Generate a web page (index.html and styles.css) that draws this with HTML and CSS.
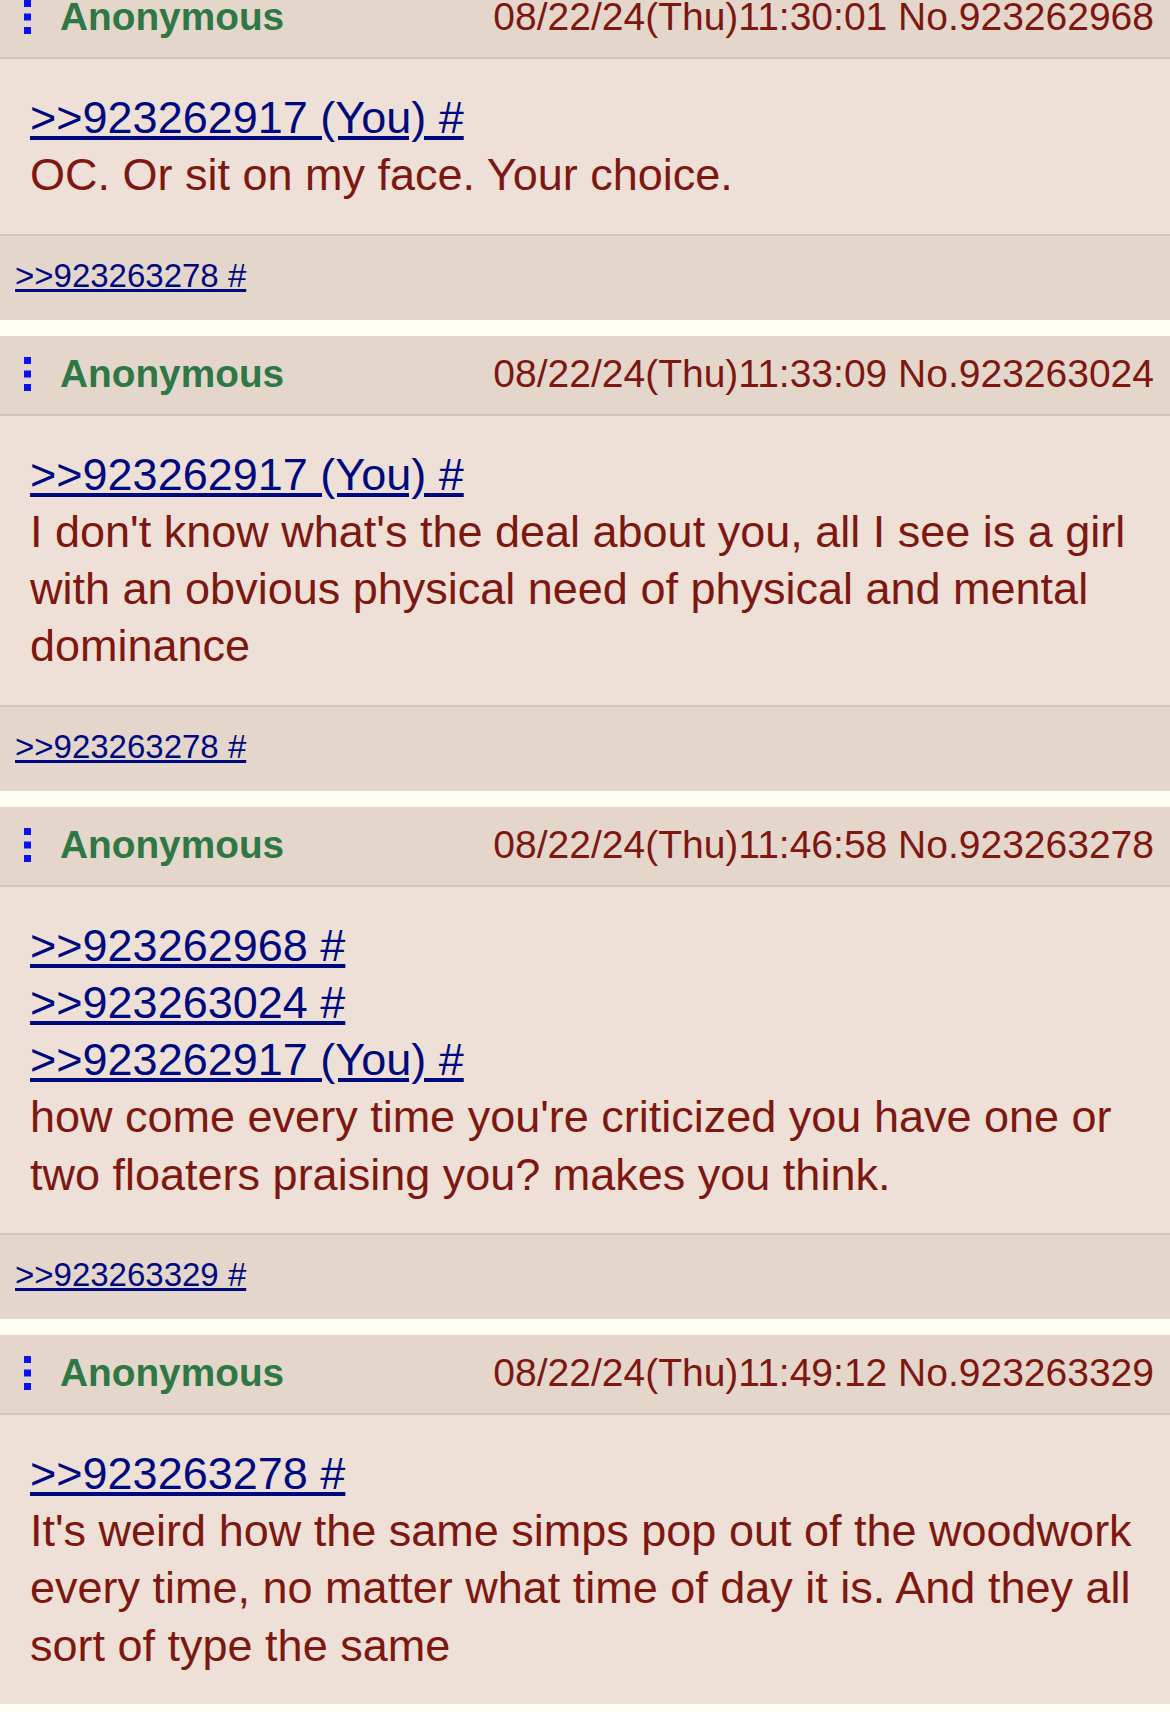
FILE: index.html
```html
<!DOCTYPE html>
<html lang="en">
<head>
<meta charset="utf-8">
<title>Thread</title>
<link rel="stylesheet" href="styles.css">
</head>
<body>
<main class="thread">

  <article class="post">
    <header class="post-head">
      <svg class="menu-dots" width="7" height="34" viewBox="0 0 7 34" aria-hidden="true"><rect x="0" y="0" width="7" height="7"/><rect x="0" y="13.5" width="7" height="7"/><rect x="0" y="27" width="7" height="7"/></svg>
      <span class="name">Anonymous</span>
      <span class="meta">08/22/24(Thu)11:30:01 No.923262968</span>
    </header>
    <div class="post-body">
      <a class="quote" href="#">&gt;&gt;923262917 (You) #</a><br>
      OC. Or sit on my face. Your choice.
    </div>
    <footer class="post-replies"><a href="#">&gt;&gt;923263278 #</a></footer>
  </article>

  <article class="post">
    <header class="post-head">
      <svg class="menu-dots" width="7" height="34" viewBox="0 0 7 34" aria-hidden="true"><rect x="0" y="0" width="7" height="7"/><rect x="0" y="13.5" width="7" height="7"/><rect x="0" y="27" width="7" height="7"/></svg>
      <span class="name">Anonymous</span>
      <span class="meta">08/22/24(Thu)11:33:09 No.923263024</span>
    </header>
    <div class="post-body">
      <a class="quote" href="#">&gt;&gt;923262917 (You) #</a><br>
      I don't know what's the deal about you, all I see is a girl with an obvious physical need of physical and mental dominance
    </div>
    <footer class="post-replies"><a href="#">&gt;&gt;923263278 #</a></footer>
  </article>

  <article class="post">
    <header class="post-head">
      <svg class="menu-dots" width="7" height="34" viewBox="0 0 7 34" aria-hidden="true"><rect x="0" y="0" width="7" height="7"/><rect x="0" y="13.5" width="7" height="7"/><rect x="0" y="27" width="7" height="7"/></svg>
      <span class="name">Anonymous</span>
      <span class="meta">08/22/24(Thu)11:46:58 No.923263278</span>
    </header>
    <div class="post-body">
      <a class="quote" href="#">&gt;&gt;923262968 #</a><br>
      <a class="quote" href="#">&gt;&gt;923263024 #</a><br>
      <a class="quote" href="#">&gt;&gt;923262917 (You) #</a><br>
      how come every time you're criticized you have one or two floaters praising you? makes you think.
    </div>
    <footer class="post-replies"><a href="#">&gt;&gt;923263329 #</a></footer>
  </article>

  <article class="post">
    <header class="post-head">
      <svg class="menu-dots" width="7" height="34" viewBox="0 0 7 34" aria-hidden="true"><rect x="0" y="0" width="7" height="7"/><rect x="0" y="13.5" width="7" height="7"/><rect x="0" y="27" width="7" height="7"/></svg>
      <span class="name">Anonymous</span>
      <span class="meta">08/22/24(Thu)11:49:12 No.923263329</span>
    </header>
    <div class="post-body post-body-last">
      <a class="quote" href="#">&gt;&gt;923263278 #</a><br>
      It's weird how the same simps pop out of the woodwork every time, no matter what time of day it is. And they all sort of type the same
    </div>
  </article>

</main>
</body>
</html>
```

FILE: styles.css
```css
html, body {
  margin: 0;
  padding: 0;
  background: #fffff0;
}

body {
  font-family: "Liberation Sans", Arial, sans-serif;
  color: #7d1710;
}

.thread {
  margin-top: -21px;
  display: flex;
  flex-direction: column;
  gap: 16px;
}

.post {
  display: flex;
  flex-direction: column;
}

.post-head {
  box-sizing: border-box;
  height: 80px;
  padding: 0 16px 2px 24px;
  display: flex;
  align-items: center;
  background: #e5d6cc;
  border-bottom: 2px solid #d7c2ba;
}

.menu-dots {
  display: block;
  flex: none;
  fill: #0a10f0;
}

.name {
  margin-left: 29px;
  font-weight: bold;
  font-size: 38.8px;
  color: #2f7846;
}

.meta {
  margin-left: auto;
  font-size: 39px;
  color: #7d1710;
  white-space: nowrap;
}

.post-body {
  padding: 30px 20px 30px 30px;
  background: #eee0d7;
  font-size: 45px;
  line-height: 57.25px;
  border-bottom: 2px solid #d7c2ba;
}

.post-body-last {
  border-bottom: 0;
}

.quote {
  color: #000a80;
}

.post-replies {
  box-sizing: border-box;
  height: 84px;
  padding: 0 15px 3px;
  display: flex;
  align-items: center;
  background: #e5d6cc;
  font-size: 33px;
}

.post-replies a {
  color: #000a80;
}
```
